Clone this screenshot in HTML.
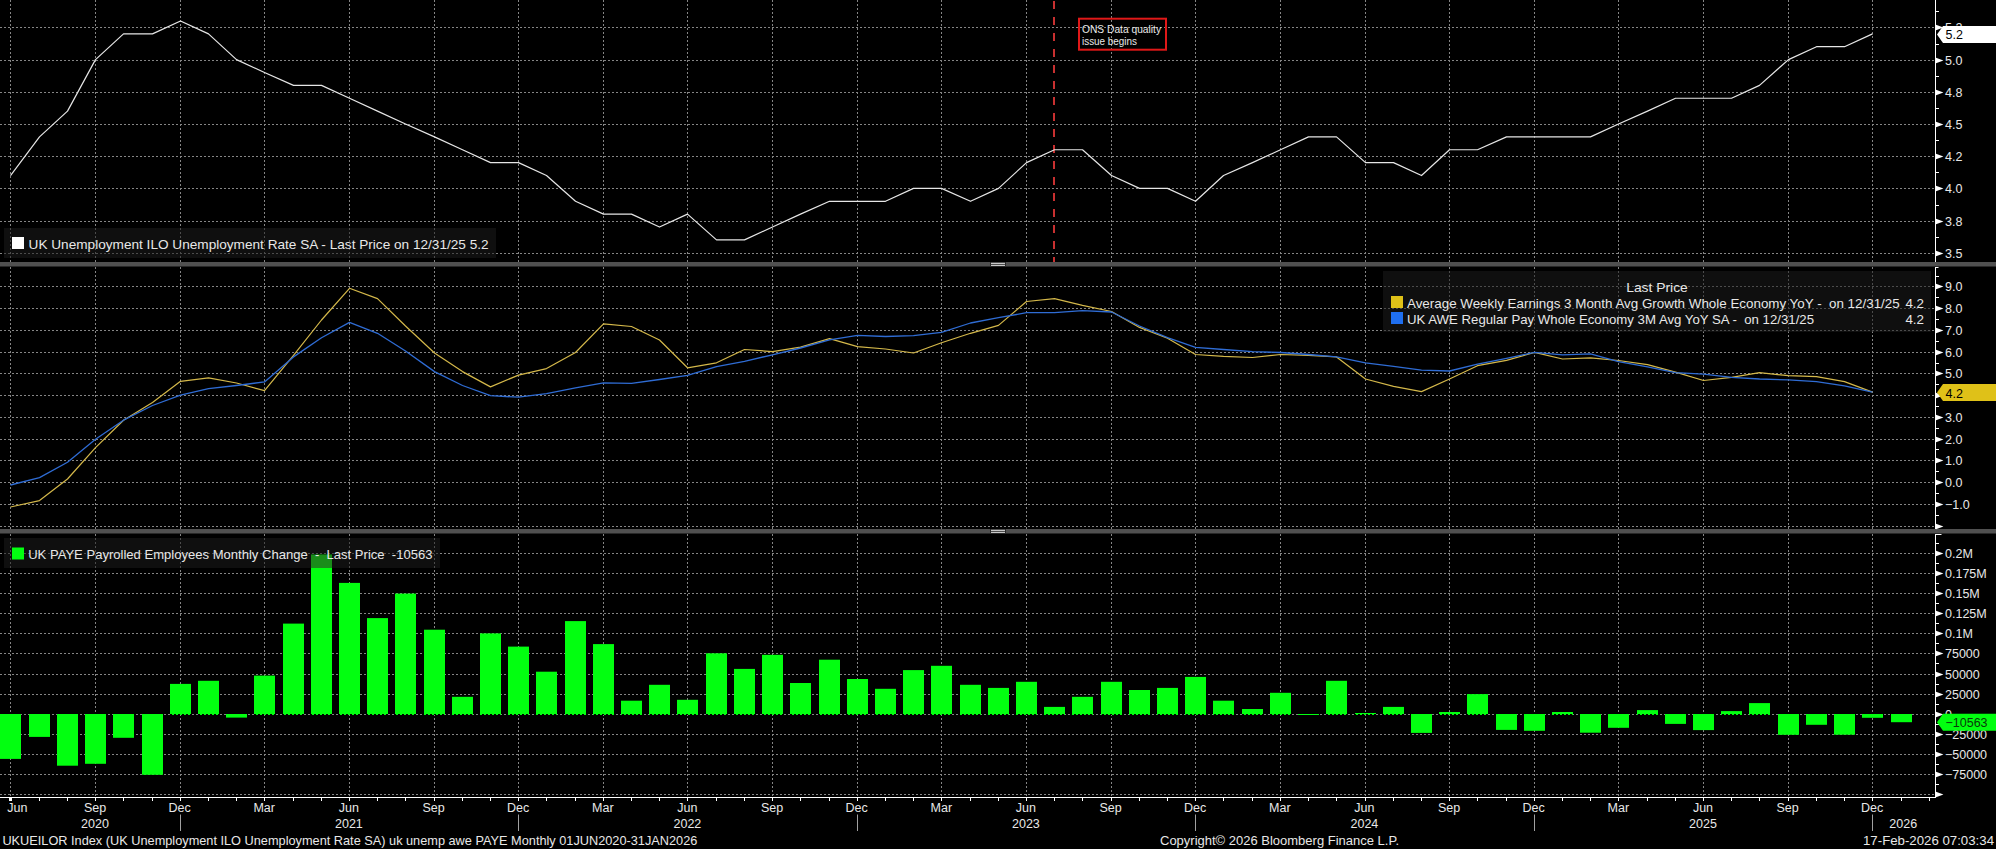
<!DOCTYPE html>
<html><head><meta charset="utf-8"><title>Bloomberg chart</title>
<style>
html,body{margin:0;padding:0;background:#000;width:1996px;height:849px;overflow:hidden;}
svg{display:block;}
text{font-family:"Liberation Sans", sans-serif;fill:#e8e8e8;}
</style></head><body>
<svg width="1996" height="849" viewBox="0 0 1996 849">
<rect x="0" y="0" width="1996" height="849" fill="#000"/>

<path d="M0 27.5H1935.0 M0 60.5H1935.0 M0 92.5H1935.0 M0 124.5H1935.0 M0 156.5H1935.0 M0 188.5H1935.0 M0 221.5H1935.0 M0 253.5H1935.0 M0 286.5H1935.0 M0 308.5H1935.0 M0 330.5H1935.0 M0 352.5H1935.0 M0 373.5H1935.0 M0 395.5H1935.0 M0 417.5H1935.0 M0 439.5H1935.0 M0 460.5H1935.0 M0 482.5H1935.0 M0 504.5H1935.0 M0 526.5H1935.0 M0 553.5H1935.0 M0 573.5H1935.0 M0 593.5H1935.0 M0 613.5H1935.0 M0 633.5H1935.0 M0 653.5H1935.0 M0 674.5H1935.0 M0 694.5H1935.0 M0 714.5H1935.0 M0 734.5H1935.0 M0 754.5H1935.0 M0 774.5H1935.0 M0 794.5H1935.0 M10.5 0V262 M10.5 267V529 M10.5 534V796 M95.5 0V262 M95.5 267V529 M95.5 534V796 M180.5 0V262 M180.5 267V529 M180.5 534V796 M264.5 0V262 M264.5 267V529 M264.5 534V796 M349.5 0V262 M349.5 267V529 M349.5 534V796 M434.5 0V262 M434.5 267V529 M434.5 534V796 M518.5 0V262 M518.5 267V529 M518.5 534V796 M603.5 0V262 M603.5 267V529 M603.5 534V796 M687.5 0V262 M687.5 267V529 M687.5 534V796 M772.5 0V262 M772.5 267V529 M772.5 534V796 M857.5 0V262 M857.5 267V529 M857.5 534V796 M941.5 0V262 M941.5 267V529 M941.5 534V796 M1026.5 0V262 M1026.5 267V529 M1026.5 534V796 M1111.5 0V262 M1111.5 267V529 M1111.5 534V796 M1195.5 0V262 M1195.5 267V529 M1195.5 534V796 M1280.5 0V262 M1280.5 267V529 M1280.5 534V796 M1365.5 0V262 M1365.5 267V529 M1365.5 534V796 M1449.5 0V262 M1449.5 267V529 M1449.5 534V796 M1534.5 0V262 M1534.5 267V529 M1534.5 534V796 M1618.5 0V262 M1618.5 267V529 M1618.5 534V796 M1703.5 0V262 M1703.5 267V529 M1703.5 534V796 M1788.5 0V262 M1788.5 267V529 M1788.5 534V796 M1872.5 0V262 M1872.5 267V529 M1872.5 534V796" stroke="#858585" stroke-width="1" stroke-dasharray="2 2" fill="none" shape-rendering="crispEdges"/>
<defs><clipPath id="lbclip"><rect x="4" y="228" width="492" height="30"/><rect x="1383" y="271" width="548" height="61"/><rect x="4" y="538" width="436" height="30"/></clipPath></defs>
<rect x="4" y="228" width="492" height="30" fill="#0f0f0f"/>
<rect x="1383" y="271" width="548" height="61" fill="#0f0f0f"/>
<rect x="4" y="538" width="436" height="30" fill="#0f0f0f"/>
<path d="M0 27.5H1935.0 M0 60.5H1935.0 M0 92.5H1935.0 M0 124.5H1935.0 M0 156.5H1935.0 M0 188.5H1935.0 M0 221.5H1935.0 M0 253.5H1935.0 M0 286.5H1935.0 M0 308.5H1935.0 M0 330.5H1935.0 M0 352.5H1935.0 M0 373.5H1935.0 M0 395.5H1935.0 M0 417.5H1935.0 M0 439.5H1935.0 M0 460.5H1935.0 M0 482.5H1935.0 M0 504.5H1935.0 M0 526.5H1935.0 M0 553.5H1935.0 M0 573.5H1935.0 M0 593.5H1935.0 M0 613.5H1935.0 M0 633.5H1935.0 M0 653.5H1935.0 M0 674.5H1935.0 M0 694.5H1935.0 M0 714.5H1935.0 M0 734.5H1935.0 M0 754.5H1935.0 M0 774.5H1935.0 M0 794.5H1935.0 M10.5 0V262 M10.5 267V529 M10.5 534V796 M95.5 0V262 M95.5 267V529 M95.5 534V796 M180.5 0V262 M180.5 267V529 M180.5 534V796 M264.5 0V262 M264.5 267V529 M264.5 534V796 M349.5 0V262 M349.5 267V529 M349.5 534V796 M434.5 0V262 M434.5 267V529 M434.5 534V796 M518.5 0V262 M518.5 267V529 M518.5 534V796 M603.5 0V262 M603.5 267V529 M603.5 534V796 M687.5 0V262 M687.5 267V529 M687.5 534V796 M772.5 0V262 M772.5 267V529 M772.5 534V796 M857.5 0V262 M857.5 267V529 M857.5 534V796 M941.5 0V262 M941.5 267V529 M941.5 534V796 M1026.5 0V262 M1026.5 267V529 M1026.5 534V796 M1111.5 0V262 M1111.5 267V529 M1111.5 534V796 M1195.5 0V262 M1195.5 267V529 M1195.5 534V796 M1280.5 0V262 M1280.5 267V529 M1280.5 534V796 M1365.5 0V262 M1365.5 267V529 M1365.5 534V796 M1449.5 0V262 M1449.5 267V529 M1449.5 534V796 M1534.5 0V262 M1534.5 267V529 M1534.5 534V796 M1618.5 0V262 M1618.5 267V529 M1618.5 534V796 M1703.5 0V262 M1703.5 267V529 M1703.5 534V796 M1788.5 0V262 M1788.5 267V529 M1788.5 534V796 M1872.5 0V262 M1872.5 267V529 M1872.5 534V796" stroke="#4c4c4c" stroke-width="1" stroke-dasharray="2 2" fill="none" shape-rendering="crispEdges" clip-path="url(#lbclip)"/>
<path d="M1054 0V262" stroke="#c83030" stroke-width="2" stroke-dasharray="8 8" stroke-dashoffset="-1" fill="none"/>
<rect x="1079" y="18.7" width="87" height="31" fill="none" stroke="#e01818" stroke-width="2"/>
<text x="1082" y="33" font-size="11" textLength="79" lengthAdjust="spacingAndGlyphs">ONS Data quality</text>
<text x="1082" y="45.3" font-size="11" textLength="55" lengthAdjust="spacingAndGlyphs">issue begins</text>
<polyline points="10.50,175.52 39.50,136.88 67.50,111.12 95.50,59.60 123.50,33.84 152.50,33.84 180.50,20.96 208.50,33.84 236.50,59.60 264.50,72.48 293.50,85.36 321.50,85.36 349.50,98.24 377.50,111.12 405.50,124.00 434.50,136.88 462.50,149.76 490.50,162.64 518.50,162.64 546.50,175.52 575.50,201.28 603.50,214.16 631.50,214.16 659.50,227.04 687.50,214.16 716.50,239.92 744.50,239.92 772.50,227.04 800.50,214.16 829.50,201.28 857.50,201.28 885.50,201.28 913.50,188.40 941.50,188.40 970.50,201.28 998.50,188.40 1026.50,162.64 1054.50,149.76 1082.50,149.76 1111.50,175.52 1139.50,188.40 1167.50,188.40 1195.50,201.28 1223.50,175.52 1252.50,162.64 1280.50,149.76 1308.50,136.88 1336.50,136.88 1365.50,162.64 1393.50,162.64 1421.50,175.52 1449.50,149.76 1477.50,149.76 1506.50,136.88 1534.50,136.88 1562.50,136.88 1590.50,136.88 1618.50,124.00 1647.50,111.12 1675.50,98.24 1703.50,98.24 1731.50,98.24 1759.50,85.36 1788.50,59.60 1816.50,46.72 1844.50,46.72 1872.50,33.84" fill="none" stroke="#e6e6e6" stroke-width="1.2" stroke-linejoin="round"/>
<polyline points="10.50,507.00 39.50,500.60 67.50,479.00 95.50,447.60 123.50,420.20 152.50,402.50 180.50,381.30 208.50,377.80 236.50,383.00 264.50,390.70 293.50,355.40 321.50,320.00 349.50,288.30 377.50,298.60 405.50,326.00 434.50,353.00 462.50,371.60 490.50,386.90 518.50,375.10 546.50,368.60 575.50,352.50 603.50,323.90 631.50,326.50 659.50,340.00 687.50,367.80 716.50,362.80 744.50,349.50 772.50,351.60 800.50,347.10 829.50,338.60 857.50,346.60 885.50,349.00 913.50,353.00 941.50,342.70 970.50,333.30 998.50,325.40 1026.50,301.50 1054.50,298.60 1082.50,305.30 1111.50,311.50 1139.50,327.40 1167.50,338.30 1195.50,354.50 1223.50,356.30 1252.50,357.50 1280.50,354.50 1308.50,355.40 1336.50,356.90 1365.50,379.00 1393.50,386.30 1421.50,391.60 1449.50,379.00 1477.50,365.70 1506.50,360.40 1534.50,352.30 1562.50,359.00 1590.50,357.80 1618.50,360.50 1647.50,364.70 1675.50,372.10 1703.50,380.50 1731.50,377.30 1759.50,372.70 1788.50,375.70 1816.50,376.70 1844.50,381.60 1872.50,392.10" fill="none" stroke="#d4b84a" stroke-width="1.2" stroke-linejoin="round"/>
<polyline points="10.50,485.00 39.50,477.60 67.50,462.30 95.50,439.30 123.50,420.20 152.50,405.50 180.50,395.10 208.50,388.70 236.50,385.50 264.50,381.90 293.50,356.90 321.50,337.70 349.50,322.40 377.50,333.30 405.50,351.00 434.50,371.60 462.50,385.50 490.50,395.70 518.50,397.20 546.50,393.70 575.50,387.80 603.50,382.80 631.50,383.40 659.50,379.50 687.50,375.40 716.50,366.60 744.50,361.30 772.50,354.80 800.50,348.00 829.50,339.80 857.50,335.40 885.50,336.50 913.50,335.70 941.50,332.40 970.50,323.00 998.50,317.70 1026.50,312.70 1054.50,312.70 1082.50,310.60 1111.50,312.00 1139.50,326.00 1167.50,337.70 1195.50,347.40 1223.50,349.50 1252.50,351.60 1280.50,352.50 1308.50,354.50 1336.50,356.90 1365.50,362.80 1393.50,366.30 1421.50,370.10 1449.50,371.00 1477.50,364.20 1506.50,358.30 1534.50,352.30 1562.50,354.80 1590.50,353.80 1618.50,361.60 1647.50,366.80 1675.50,372.70 1703.50,374.20 1731.50,377.30 1759.50,379.00 1788.50,379.90 1816.50,381.60 1844.50,385.80 1872.50,392.10" fill="none" stroke="#2f6cd4" stroke-width="1.3" stroke-linejoin="round"/>
<g fill="#02ff10"><rect x="0" y="714.0" width="21" height="44.9"/><rect x="29" y="714.0" width="21" height="22.9"/><rect x="57" y="714.0" width="21" height="51.7"/><rect x="85" y="714.0" width="21" height="49.8"/><rect x="113" y="714.0" width="21" height="23.8"/><rect x="142" y="714.0" width="21" height="60.8"/><rect x="170" y="683.9" width="21" height="31.1"/><rect x="198" y="680.8" width="21" height="34.2"/><rect x="226" y="714.0" width="21" height="3.6"/><rect x="254" y="675.6" width="21" height="39.4"/><rect x="283" y="623.6" width="21" height="91.4"/><rect x="311" y="554.7" width="21" height="160.3"/><rect x="339" y="582.9" width="21" height="132.1"/><rect x="367" y="618.1" width="21" height="96.9"/><rect x="395" y="593.6" width="21" height="121.4"/><rect x="424" y="629.7" width="21" height="85.3"/><rect x="452" y="696.8" width="21" height="18.2"/><rect x="480" y="633.4" width="21" height="81.6"/><rect x="508" y="646.6" width="21" height="68.4"/><rect x="536" y="671.7" width="21" height="43.3"/><rect x="565" y="621.1" width="21" height="93.9"/><rect x="593" y="644.1" width="21" height="70.9"/><rect x="621" y="700.7" width="21" height="14.3"/><rect x="649" y="684.8" width="21" height="30.2"/><rect x="677" y="699.8" width="21" height="15.2"/><rect x="706" y="653.3" width="21" height="61.7"/><rect x="734" y="668.9" width="21" height="46.1"/><rect x="762" y="654.8" width="21" height="60.2"/><rect x="790" y="683.0" width="21" height="32.0"/><rect x="819" y="659.7" width="21" height="55.3"/><rect x="847" y="679.0" width="21" height="36.0"/><rect x="875" y="688.8" width="21" height="26.2"/><rect x="903" y="670.1" width="21" height="44.9"/><rect x="931" y="665.8" width="21" height="49.2"/><rect x="960" y="684.8" width="21" height="30.2"/><rect x="988" y="687.9" width="21" height="27.1"/><rect x="1016" y="681.8" width="21" height="33.2"/><rect x="1044" y="706.9" width="21" height="8.1"/><rect x="1072" y="696.8" width="21" height="18.2"/><rect x="1101" y="681.8" width="21" height="33.2"/><rect x="1129" y="690.0" width="21" height="25.0"/><rect x="1157" y="687.9" width="21" height="27.1"/><rect x="1185" y="676.9" width="21" height="38.1"/><rect x="1213" y="700.7" width="21" height="14.3"/><rect x="1242" y="709.0" width="21" height="6.0"/><rect x="1270" y="692.8" width="21" height="22.2"/><rect x="1298" y="714.0" width="21" height="1.0"/><rect x="1326" y="680.8" width="21" height="34.2"/><rect x="1355" y="713.0" width="21" height="2.0"/><rect x="1383" y="706.9" width="21" height="8.1"/><rect x="1411" y="714.0" width="21" height="18.9"/><rect x="1439" y="712.0" width="21" height="3.0"/><rect x="1467" y="694.1" width="21" height="20.9"/><rect x="1496" y="714.0" width="21" height="15.9"/><rect x="1524" y="714.0" width="21" height="16.8"/><rect x="1552" y="712.0" width="21" height="3.0"/><rect x="1580" y="714.0" width="21" height="18.7"/><rect x="1608" y="714.0" width="21" height="13.8"/><rect x="1637" y="710.1" width="21" height="4.9"/><rect x="1665" y="714.0" width="21" height="9.9"/><rect x="1693" y="714.0" width="21" height="16.1"/><rect x="1721" y="711.1" width="21" height="3.9"/><rect x="1749" y="703.1" width="21" height="11.9"/><rect x="1778" y="714.0" width="21" height="20.8"/><rect x="1806" y="714.0" width="21" height="10.8"/><rect x="1834" y="714.0" width="21" height="20.7"/><rect x="1862" y="714.0" width="21" height="3.8"/><rect x="1891" y="714.0" width="21" height="8.2"/></g>
<defs><clipPath id="posclip"><rect x="170" y="713" width="21" height="3"/><rect x="198" y="713" width="21" height="3"/><rect x="254" y="713" width="21" height="3"/><rect x="283" y="713" width="21" height="3"/><rect x="311" y="713" width="21" height="3"/><rect x="339" y="713" width="21" height="3"/><rect x="367" y="713" width="21" height="3"/><rect x="395" y="713" width="21" height="3"/><rect x="424" y="713" width="21" height="3"/><rect x="452" y="713" width="21" height="3"/><rect x="480" y="713" width="21" height="3"/><rect x="508" y="713" width="21" height="3"/><rect x="536" y="713" width="21" height="3"/><rect x="565" y="713" width="21" height="3"/><rect x="593" y="713" width="21" height="3"/><rect x="621" y="713" width="21" height="3"/><rect x="649" y="713" width="21" height="3"/><rect x="677" y="713" width="21" height="3"/><rect x="706" y="713" width="21" height="3"/><rect x="734" y="713" width="21" height="3"/><rect x="762" y="713" width="21" height="3"/><rect x="790" y="713" width="21" height="3"/><rect x="819" y="713" width="21" height="3"/><rect x="847" y="713" width="21" height="3"/><rect x="875" y="713" width="21" height="3"/><rect x="903" y="713" width="21" height="3"/><rect x="931" y="713" width="21" height="3"/><rect x="960" y="713" width="21" height="3"/><rect x="988" y="713" width="21" height="3"/><rect x="1016" y="713" width="21" height="3"/><rect x="1044" y="713" width="21" height="3"/><rect x="1072" y="713" width="21" height="3"/><rect x="1101" y="713" width="21" height="3"/><rect x="1129" y="713" width="21" height="3"/><rect x="1157" y="713" width="21" height="3"/><rect x="1185" y="713" width="21" height="3"/><rect x="1213" y="713" width="21" height="3"/><rect x="1242" y="713" width="21" height="3"/><rect x="1270" y="713" width="21" height="3"/><rect x="1326" y="713" width="21" height="3"/><rect x="1355" y="713" width="21" height="3"/><rect x="1383" y="713" width="21" height="3"/><rect x="1439" y="713" width="21" height="3"/><rect x="1467" y="713" width="21" height="3"/><rect x="1552" y="713" width="21" height="3"/><rect x="1637" y="713" width="21" height="3"/><rect x="1721" y="713" width="21" height="3"/><rect x="1749" y="713" width="21" height="3"/></clipPath></defs>
<path d="M0 714.5H1935" stroke="#000" stroke-width="1" stroke-dasharray="2 2" stroke-dashoffset="2" shape-rendering="crispEdges" clip-path="url(#posclip)"/>
<rect x="311" y="555" width="21" height="13" fill="#1a8c1a"/>
<rect x="0" y="262" width="1996" height="4.5" fill="#505050"/>
<rect x="990" y="262" width="1" height="4.5" fill="#2a2a2a"/><rect x="1005" y="262" width="1" height="4.5" fill="#2a2a2a"/>
<rect x="991" y="263" width="14" height="1" fill="#c8c8c8"/><rect x="991" y="265" width="14" height="1" fill="#c8c8c8"/>
<rect x="0" y="529" width="1996" height="4.5" fill="#505050"/>
<rect x="990" y="529" width="1" height="4.5" fill="#2a2a2a"/><rect x="1005" y="529" width="1" height="4.5" fill="#2a2a2a"/>
<rect x="991" y="530" width="14" height="1" fill="#c8c8c8"/><rect x="991" y="532" width="14" height="1" fill="#c8c8c8"/>
<rect x="1935" y="0" width="1" height="262" fill="#fff"/><rect x="1935" y="267" width="1" height="262" fill="#fff"/><rect x="1935" y="534" width="1" height="263" fill="#fff"/><rect x="1936" y="267" width="2.5" height="1" fill="#fff"/><polygon points="1936,24.7 1943.4,27.5 1936,30.3" fill="#fff"/><polygon points="1936,57.7 1943.4,60.5 1936,63.3" fill="#fff"/><polygon points="1936,89.7 1943.4,92.5 1936,95.3" fill="#fff"/><polygon points="1936,121.7 1943.4,124.5 1936,127.3" fill="#fff"/><polygon points="1936,153.7 1943.4,156.5 1936,159.3" fill="#fff"/><polygon points="1936,185.7 1943.4,188.5 1936,191.3" fill="#fff"/><polygon points="1936,218.7 1943.4,221.5 1936,224.3" fill="#fff"/><polygon points="1936,250.7 1943.4,253.5 1936,256.3" fill="#fff"/><rect x="1936" y="11.0" width="3" height="1" fill="#fff"/><rect x="1936" y="44.0" width="3" height="1" fill="#fff"/><rect x="1936" y="76.0" width="3" height="1" fill="#fff"/><rect x="1936" y="108.0" width="3" height="1" fill="#fff"/><rect x="1936" y="140.0" width="3" height="1" fill="#fff"/><rect x="1936" y="172.0" width="3" height="1" fill="#fff"/><rect x="1936" y="205.0" width="3" height="1" fill="#fff"/><rect x="1936" y="237.0" width="3" height="1" fill="#fff"/><polygon points="1936,283.7 1943.4,286.5 1936,289.3" fill="#fff"/><polygon points="1936,305.7 1943.4,308.5 1936,311.3" fill="#fff"/><polygon points="1936,327.7 1943.4,330.5 1936,333.3" fill="#fff"/><polygon points="1936,349.7 1943.4,352.5 1936,355.3" fill="#fff"/><polygon points="1936,370.7 1943.4,373.5 1936,376.3" fill="#fff"/><polygon points="1936,392.7 1943.4,395.5 1936,398.3" fill="#fff"/><polygon points="1936,414.7 1943.4,417.5 1936,420.3" fill="#fff"/><polygon points="1936,436.7 1943.4,439.5 1936,442.3" fill="#fff"/><polygon points="1936,457.7 1943.4,460.5 1936,463.3" fill="#fff"/><polygon points="1936,479.7 1943.4,482.5 1936,485.3" fill="#fff"/><polygon points="1936,501.7 1943.4,504.5 1936,507.3" fill="#fff"/><polygon points="1936,523.7 1943.4,526.5 1936,529.3" fill="#fff"/><rect x="1936" y="276.0" width="3" height="1" fill="#fff"/><rect x="1936" y="297.0" width="3" height="1" fill="#fff"/><rect x="1936" y="319.0" width="3" height="1" fill="#fff"/><rect x="1936" y="341.0" width="3" height="1" fill="#fff"/><rect x="1936" y="363.0" width="3" height="1" fill="#fff"/><rect x="1936" y="384.0" width="3" height="1" fill="#fff"/><rect x="1936" y="406.0" width="3" height="1" fill="#fff"/><rect x="1936" y="428.0" width="3" height="1" fill="#fff"/><rect x="1936" y="449.0" width="3" height="1" fill="#fff"/><rect x="1936" y="471.0" width="3" height="1" fill="#fff"/><rect x="1936" y="493.0" width="3" height="1" fill="#fff"/><rect x="1936" y="515.0" width="3" height="1" fill="#fff"/><polygon points="1936,550.7 1943.4,553.5 1936,556.3" fill="#fff"/><polygon points="1936,570.7 1943.4,573.5 1936,576.3" fill="#fff"/><polygon points="1936,590.7 1943.4,593.5 1936,596.3" fill="#fff"/><polygon points="1936,610.7 1943.4,613.5 1936,616.3" fill="#fff"/><polygon points="1936,630.7 1943.4,633.5 1936,636.3" fill="#fff"/><polygon points="1936,650.7 1943.4,653.5 1936,656.3" fill="#fff"/><polygon points="1936,671.7 1943.4,674.5 1936,677.3" fill="#fff"/><polygon points="1936,691.7 1943.4,694.5 1936,697.3" fill="#fff"/><polygon points="1936,711.7 1943.4,714.5 1936,717.3" fill="#fff"/><polygon points="1936,731.7 1943.4,734.5 1936,737.3" fill="#fff"/><polygon points="1936,751.7 1943.4,754.5 1936,757.3" fill="#fff"/><polygon points="1936,771.7 1943.4,774.5 1936,777.3" fill="#fff"/><polygon points="1936,791.7 1943.4,794.5 1936,797.3" fill="#fff"/><rect x="1936" y="543.0" width="3" height="1" fill="#fff"/><rect x="1936" y="563.0" width="3" height="1" fill="#fff"/><rect x="1936" y="583.0" width="3" height="1" fill="#fff"/><rect x="1936" y="603.0" width="3" height="1" fill="#fff"/><rect x="1936" y="623.0" width="3" height="1" fill="#fff"/><rect x="1936" y="643.0" width="3" height="1" fill="#fff"/><rect x="1936" y="663.0" width="3" height="1" fill="#fff"/><rect x="1936" y="684.0" width="3" height="1" fill="#fff"/><rect x="1936" y="704.0" width="3" height="1" fill="#fff"/><rect x="1936" y="724.0" width="3" height="1" fill="#fff"/><rect x="1936" y="744.0" width="3" height="1" fill="#fff"/><rect x="1936" y="764.0" width="3" height="1" fill="#fff"/><rect x="1936" y="784.0" width="3" height="1" fill="#fff"/><rect x="1936" y="534" width="5.5" height="1" fill="#fff"/>
<text x="1945" y="32.4" font-size="12.5">5.2</text><text x="1945" y="65.4" font-size="12.5">5.0</text><text x="1945" y="97.4" font-size="12.5">4.8</text><text x="1945" y="129.4" font-size="12.5">4.5</text><text x="1945" y="161.4" font-size="12.5">4.2</text><text x="1945" y="193.4" font-size="12.5">4.0</text><text x="1945" y="226.4" font-size="12.5">3.8</text><text x="1945" y="258.4" font-size="12.5">3.5</text><text x="1945" y="291.4" font-size="12.5">9.0</text><text x="1945" y="313.4" font-size="12.5">8.0</text><text x="1945" y="335.4" font-size="12.5">7.0</text><text x="1945" y="357.4" font-size="12.5">6.0</text><text x="1945" y="378.4" font-size="12.5">5.0</text><text x="1945" y="400.4" font-size="12.5">4.0</text><text x="1945" y="422.4" font-size="12.5">3.0</text><text x="1945" y="444.4" font-size="12.5">2.0</text><text x="1945" y="465.4" font-size="12.5">1.0</text><text x="1945" y="487.4" font-size="12.5">0.0</text><text x="1945" y="509.4" font-size="12.5">−1.0</text><text x="1945" y="558.4" font-size="12.5">0.2M</text><text x="1945" y="578.4" font-size="12.5">0.175M</text><text x="1945" y="598.4" font-size="12.5">0.15M</text><text x="1945" y="618.4" font-size="12.5">0.125M</text><text x="1945" y="638.4" font-size="12.5">0.1M</text><text x="1945" y="658.4" font-size="12.5">75000</text><text x="1945" y="679.4" font-size="12.5">50000</text><text x="1945" y="699.4" font-size="12.5">25000</text><text x="1945" y="719.4" font-size="12.5">0</text><text x="1945" y="739.4" font-size="12.5">−25000</text><text x="1945" y="759.4" font-size="12.5">−50000</text><text x="1945" y="779.4" font-size="12.5">−75000</text>
<polygon points="1937,34.4 1943,25.9 1996,25.9 1996,42.9 1943,42.9" fill="#ffffff"/><text x="1945.5" y="39.4" font-size="12.5" style="fill:#000">5.2</text>
<polygon points="1937,392.5 1943,384.0 1996,384.0 1996,401.0 1943,401.0" fill="#dfc118"/><text x="1945.5" y="397.5" font-size="12.5" style="fill:#000">4.2</text>
<polygon points="1937,722.3 1943,713.8 1996,713.8 1996,730.8 1943,730.8" fill="#02ff10"/><text x="1945.5" y="727.3" font-size="12.5" style="fill:#0a3a0a">−10563</text>
<rect x="12" y="237" width="12" height="12" fill="#fff"/>
<text x="28.6" y="248.6" font-size="13.5" textLength="460" lengthAdjust="spacingAndGlyphs">UK Unemployment ILO Unemployment Rate SA - Last Price on 12/31/25 5.2</text>
<text x="1626.2" y="292" font-size="13.5" textLength="61.6" lengthAdjust="spacingAndGlyphs">Last Price</text>
<rect x="1391" y="296" width="12" height="12" fill="#dfc118"/>
<rect x="1391" y="312" width="12" height="12" fill="#1f6ff0"/>
<text x="1407" y="308.2" font-size="13.5" textLength="492.7" lengthAdjust="spacingAndGlyphs" xml:space="preserve" style="white-space:pre">Average Weekly Earnings 3 Month Avg Growth Whole Economy YoY -  on 12/31/25</text>
<text x="1905.4" y="308.2" font-size="13.5" textLength="18.6" lengthAdjust="spacingAndGlyphs">4.2</text>
<text x="1407" y="324.2" font-size="13.5" textLength="407" lengthAdjust="spacingAndGlyphs" xml:space="preserve" style="white-space:pre">UK AWE Regular Pay Whole Economy 3M Avg YoY SA -  on 12/31/25</text>
<text x="1905.4" y="324.2" font-size="13.5" textLength="18.6" lengthAdjust="spacingAndGlyphs">4.2</text>
<rect x="12" y="547.5" width="12" height="12" fill="#02ff10"/>
<text x="28.2" y="558.8" font-size="13.5" textLength="404.3" lengthAdjust="spacingAndGlyphs" xml:space="preserve" style="white-space:pre">UK PAYE Payrolled Employees Monthly Change  -  Last Price  -10563</text>
<rect x="0" y="797" width="1936" height="1" fill="#fff"/><rect x="9" y="798" width="3" height="3" fill="#fff"/><rect x="10" y="798" width="1" height="3" fill="#fff"/><rect x="39" y="798" width="1" height="3" fill="#fff"/><rect x="67" y="798" width="1" height="3" fill="#fff"/><rect x="95" y="798" width="1" height="3" fill="#fff"/><rect x="123" y="798" width="1" height="3" fill="#fff"/><rect x="152" y="798" width="1" height="3" fill="#fff"/><rect x="180" y="798" width="1" height="3" fill="#fff"/><rect x="208" y="798" width="1" height="3" fill="#fff"/><rect x="236" y="798" width="1" height="3" fill="#fff"/><rect x="264" y="798" width="1" height="3" fill="#fff"/><rect x="293" y="798" width="1" height="3" fill="#fff"/><rect x="321" y="798" width="1" height="3" fill="#fff"/><rect x="349" y="798" width="1" height="3" fill="#fff"/><rect x="377" y="798" width="1" height="3" fill="#fff"/><rect x="405" y="798" width="1" height="3" fill="#fff"/><rect x="434" y="798" width="1" height="3" fill="#fff"/><rect x="462" y="798" width="1" height="3" fill="#fff"/><rect x="490" y="798" width="1" height="3" fill="#fff"/><rect x="518" y="798" width="1" height="3" fill="#fff"/><rect x="546" y="798" width="1" height="3" fill="#fff"/><rect x="575" y="798" width="1" height="3" fill="#fff"/><rect x="603" y="798" width="1" height="3" fill="#fff"/><rect x="631" y="798" width="1" height="3" fill="#fff"/><rect x="659" y="798" width="1" height="3" fill="#fff"/><rect x="687" y="798" width="1" height="3" fill="#fff"/><rect x="716" y="798" width="1" height="3" fill="#fff"/><rect x="744" y="798" width="1" height="3" fill="#fff"/><rect x="772" y="798" width="1" height="3" fill="#fff"/><rect x="800" y="798" width="1" height="3" fill="#fff"/><rect x="829" y="798" width="1" height="3" fill="#fff"/><rect x="857" y="798" width="1" height="3" fill="#fff"/><rect x="885" y="798" width="1" height="3" fill="#fff"/><rect x="913" y="798" width="1" height="3" fill="#fff"/><rect x="941" y="798" width="1" height="3" fill="#fff"/><rect x="970" y="798" width="1" height="3" fill="#fff"/><rect x="998" y="798" width="1" height="3" fill="#fff"/><rect x="1026" y="798" width="1" height="3" fill="#fff"/><rect x="1054" y="798" width="1" height="3" fill="#fff"/><rect x="1082" y="798" width="1" height="3" fill="#fff"/><rect x="1111" y="798" width="1" height="3" fill="#fff"/><rect x="1139" y="798" width="1" height="3" fill="#fff"/><rect x="1167" y="798" width="1" height="3" fill="#fff"/><rect x="1195" y="798" width="1" height="3" fill="#fff"/><rect x="1223" y="798" width="1" height="3" fill="#fff"/><rect x="1252" y="798" width="1" height="3" fill="#fff"/><rect x="1280" y="798" width="1" height="3" fill="#fff"/><rect x="1308" y="798" width="1" height="3" fill="#fff"/><rect x="1336" y="798" width="1" height="3" fill="#fff"/><rect x="1365" y="798" width="1" height="3" fill="#fff"/><rect x="1393" y="798" width="1" height="3" fill="#fff"/><rect x="1421" y="798" width="1" height="3" fill="#fff"/><rect x="1449" y="798" width="1" height="3" fill="#fff"/><rect x="1477" y="798" width="1" height="3" fill="#fff"/><rect x="1506" y="798" width="1" height="3" fill="#fff"/><rect x="1534" y="798" width="1" height="3" fill="#fff"/><rect x="1562" y="798" width="1" height="3" fill="#fff"/><rect x="1590" y="798" width="1" height="3" fill="#fff"/><rect x="1618" y="798" width="1" height="3" fill="#fff"/><rect x="1647" y="798" width="1" height="3" fill="#fff"/><rect x="1675" y="798" width="1" height="3" fill="#fff"/><rect x="1703" y="798" width="1" height="3" fill="#fff"/><rect x="1731" y="798" width="1" height="3" fill="#fff"/><rect x="1759" y="798" width="1" height="3" fill="#fff"/><rect x="1788" y="798" width="1" height="3" fill="#fff"/><rect x="1816" y="798" width="1" height="3" fill="#fff"/><rect x="1844" y="798" width="1" height="3" fill="#fff"/><rect x="1872" y="798" width="1" height="3" fill="#fff"/><rect x="1901" y="798" width="1" height="3" fill="#fff"/><rect x="1929" y="798" width="1" height="3" fill="#fff"/>
<text x="7.2" y="811.8" font-size="12.5">Jun</text><text x="95.0" y="811.8" font-size="12.5" text-anchor="middle">Sep</text><text x="179.6" y="811.8" font-size="12.5" text-anchor="middle">Dec</text><text x="264.2" y="811.8" font-size="12.5" text-anchor="middle">Mar</text><text x="348.9" y="811.8" font-size="12.5" text-anchor="middle">Jun</text><text x="433.5" y="811.8" font-size="12.5" text-anchor="middle">Sep</text><text x="518.1" y="811.8" font-size="12.5" text-anchor="middle">Dec</text><text x="602.8" y="811.8" font-size="12.5" text-anchor="middle">Mar</text><text x="687.4" y="811.8" font-size="12.5" text-anchor="middle">Jun</text><text x="772.0" y="811.8" font-size="12.5" text-anchor="middle">Sep</text><text x="856.7" y="811.8" font-size="12.5" text-anchor="middle">Dec</text><text x="941.3" y="811.8" font-size="12.5" text-anchor="middle">Mar</text><text x="1025.9" y="811.8" font-size="12.5" text-anchor="middle">Jun</text><text x="1110.5" y="811.8" font-size="12.5" text-anchor="middle">Sep</text><text x="1195.2" y="811.8" font-size="12.5" text-anchor="middle">Dec</text><text x="1279.8" y="811.8" font-size="12.5" text-anchor="middle">Mar</text><text x="1364.4" y="811.8" font-size="12.5" text-anchor="middle">Jun</text><text x="1449.1" y="811.8" font-size="12.5" text-anchor="middle">Sep</text><text x="1533.7" y="811.8" font-size="12.5" text-anchor="middle">Dec</text><text x="1618.3" y="811.8" font-size="12.5" text-anchor="middle">Mar</text><text x="1703.0" y="811.8" font-size="12.5" text-anchor="middle">Jun</text><text x="1787.6" y="811.8" font-size="12.5" text-anchor="middle">Sep</text><text x="1872.2" y="811.8" font-size="12.5" text-anchor="middle">Dec</text><text x="95.0" y="827.8" font-size="12.5" text-anchor="middle">2020</text><text x="348.9" y="827.8" font-size="12.5" text-anchor="middle">2021</text><text x="687.4" y="827.8" font-size="12.5" text-anchor="middle">2022</text><text x="1025.9" y="827.8" font-size="12.5" text-anchor="middle">2023</text><text x="1364.4" y="827.8" font-size="12.5" text-anchor="middle">2024</text><text x="1703.0" y="827.8" font-size="12.5" text-anchor="middle">2025</text><text x="1903.2" y="827.8" font-size="12.5" text-anchor="middle">2026</text>
<rect x="180" y="814.5" width="1" height="16.5" fill="#a0a0a0"/>
<rect x="518" y="814.5" width="1" height="16.5" fill="#a0a0a0"/>
<rect x="857" y="814.5" width="1" height="16.5" fill="#a0a0a0"/>
<rect x="1195" y="814.5" width="1" height="16.5" fill="#a0a0a0"/>
<rect x="1534" y="814.5" width="1" height="16.5" fill="#a0a0a0"/>
<rect x="1872" y="814.5" width="1" height="16.5" fill="#a0a0a0"/>
<text x="2.4" y="844.6" font-size="12.8" textLength="695" lengthAdjust="spacingAndGlyphs">UKUEILOR Index (UK Unemployment ILO Unemployment Rate SA) uk unemp awe PAYE Monthly 01JUN2020-31JAN2026</text>
<text x="1160" y="844.6" font-size="12.8" textLength="239" lengthAdjust="spacingAndGlyphs">Copyright© 2026 Bloomberg Finance L.P.</text>
<text x="1863" y="844.6" font-size="12.8" textLength="131" lengthAdjust="spacingAndGlyphs">17-Feb-2026 07:03:34</text>
</svg></body></html>
